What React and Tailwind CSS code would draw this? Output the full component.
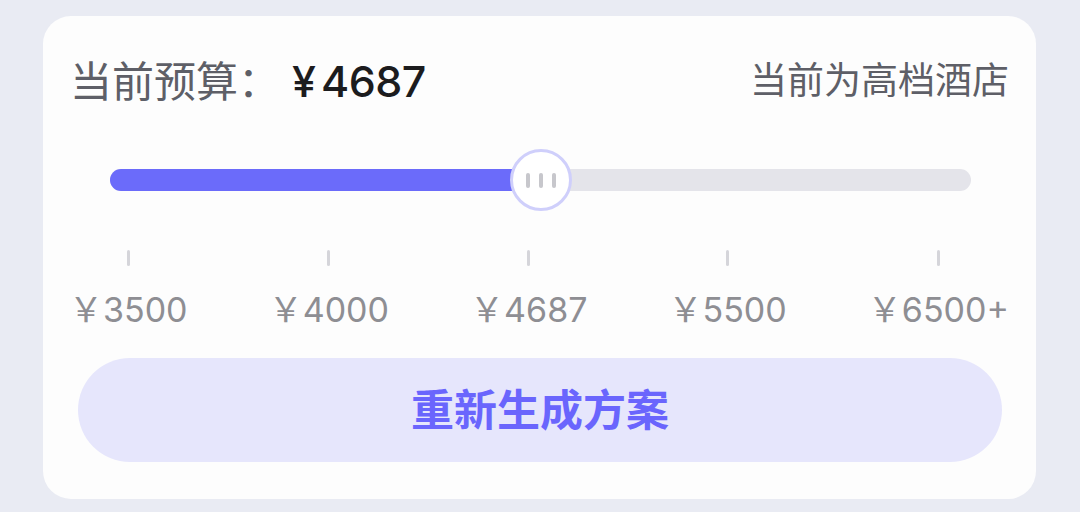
const labels = ['￥3500', '￥4000', '￥4687', '￥5500', '￥6500+'];

const App = () => {
  const font = { fontFamily: 'Inter, "Noto Sans CJK SC", sans-serif' };

  return (
    <div className="w-[1080px] h-[512px] bg-[#e9ebf3] pt-[16px] pl-[43px]" style={font}>
      <div className="w-[993px] h-[483px] bg-[#fdfdfd] rounded-[28px] pt-[37px]">
        {/* Header */}
        <div className="flex items-center justify-between h-[56px] pl-[27px] pr-[27px]">
          <div className="flex items-center">
            <span className="text-[42px] text-[#5e5f67]">当前预算：</span>
            <span className="ml-[12px] text-[43px] font-medium text-[#1c1c1e]">¥</span>
            <span className="ml-[5px] text-[43px] font-medium text-[#1c1c1e] tracking-[-0.5px]">4687</span>
          </div>
          <span className="text-[37px] text-[#5e5f67]">当前为高档酒店</span>
        </div>

        {/* Slider */}
        <div className="relative ml-[67px] mt-[40px] w-[861px] h-[62px] flex items-center">
          <div className="w-full h-[22px] rounded-full bg-[#e4e4ea]">
            <div className="w-[431px] h-full rounded-full bg-[#6b6bfa]" />
          </div>
          <div className="absolute left-[400px] top-0 w-[62px] h-[62px] rounded-full bg-white border-[3px] border-[#cfcffb] flex items-center justify-center gap-[9px]">
            <div className="w-[4px] h-[15px] rounded-full bg-[#c7c7cc]" />
            <div className="w-[4px] h-[15px] rounded-full bg-[#c7c7cc]" />
            <div className="w-[4px] h-[15px] rounded-full bg-[#c7c7cc]" />
          </div>
        </div>

        {/* Scale */}
        <div className="flex justify-between mt-[39px] pl-[26px] pr-[27px]">
          {labels.map((label) => (
            <div key={label} className="flex flex-col items-center">
              <div className="w-[3px] h-[16px] rounded-full bg-[#d5d5da]" />
              <span className="mt-[24px] text-[34px] leading-[40px] text-[#8e8e93]">{label}</span>
            </div>
          ))}
        </div>

        {/* Button */}
        <button className="mt-[28px] ml-[35px] w-[924px] h-[104px] rounded-full bg-[#e6e6fc] flex items-center justify-center text-[43px] font-bold text-[#6a65fd]">
          重新生成方案
        </button>
      </div>
    </div>
  );
};

export default App;
